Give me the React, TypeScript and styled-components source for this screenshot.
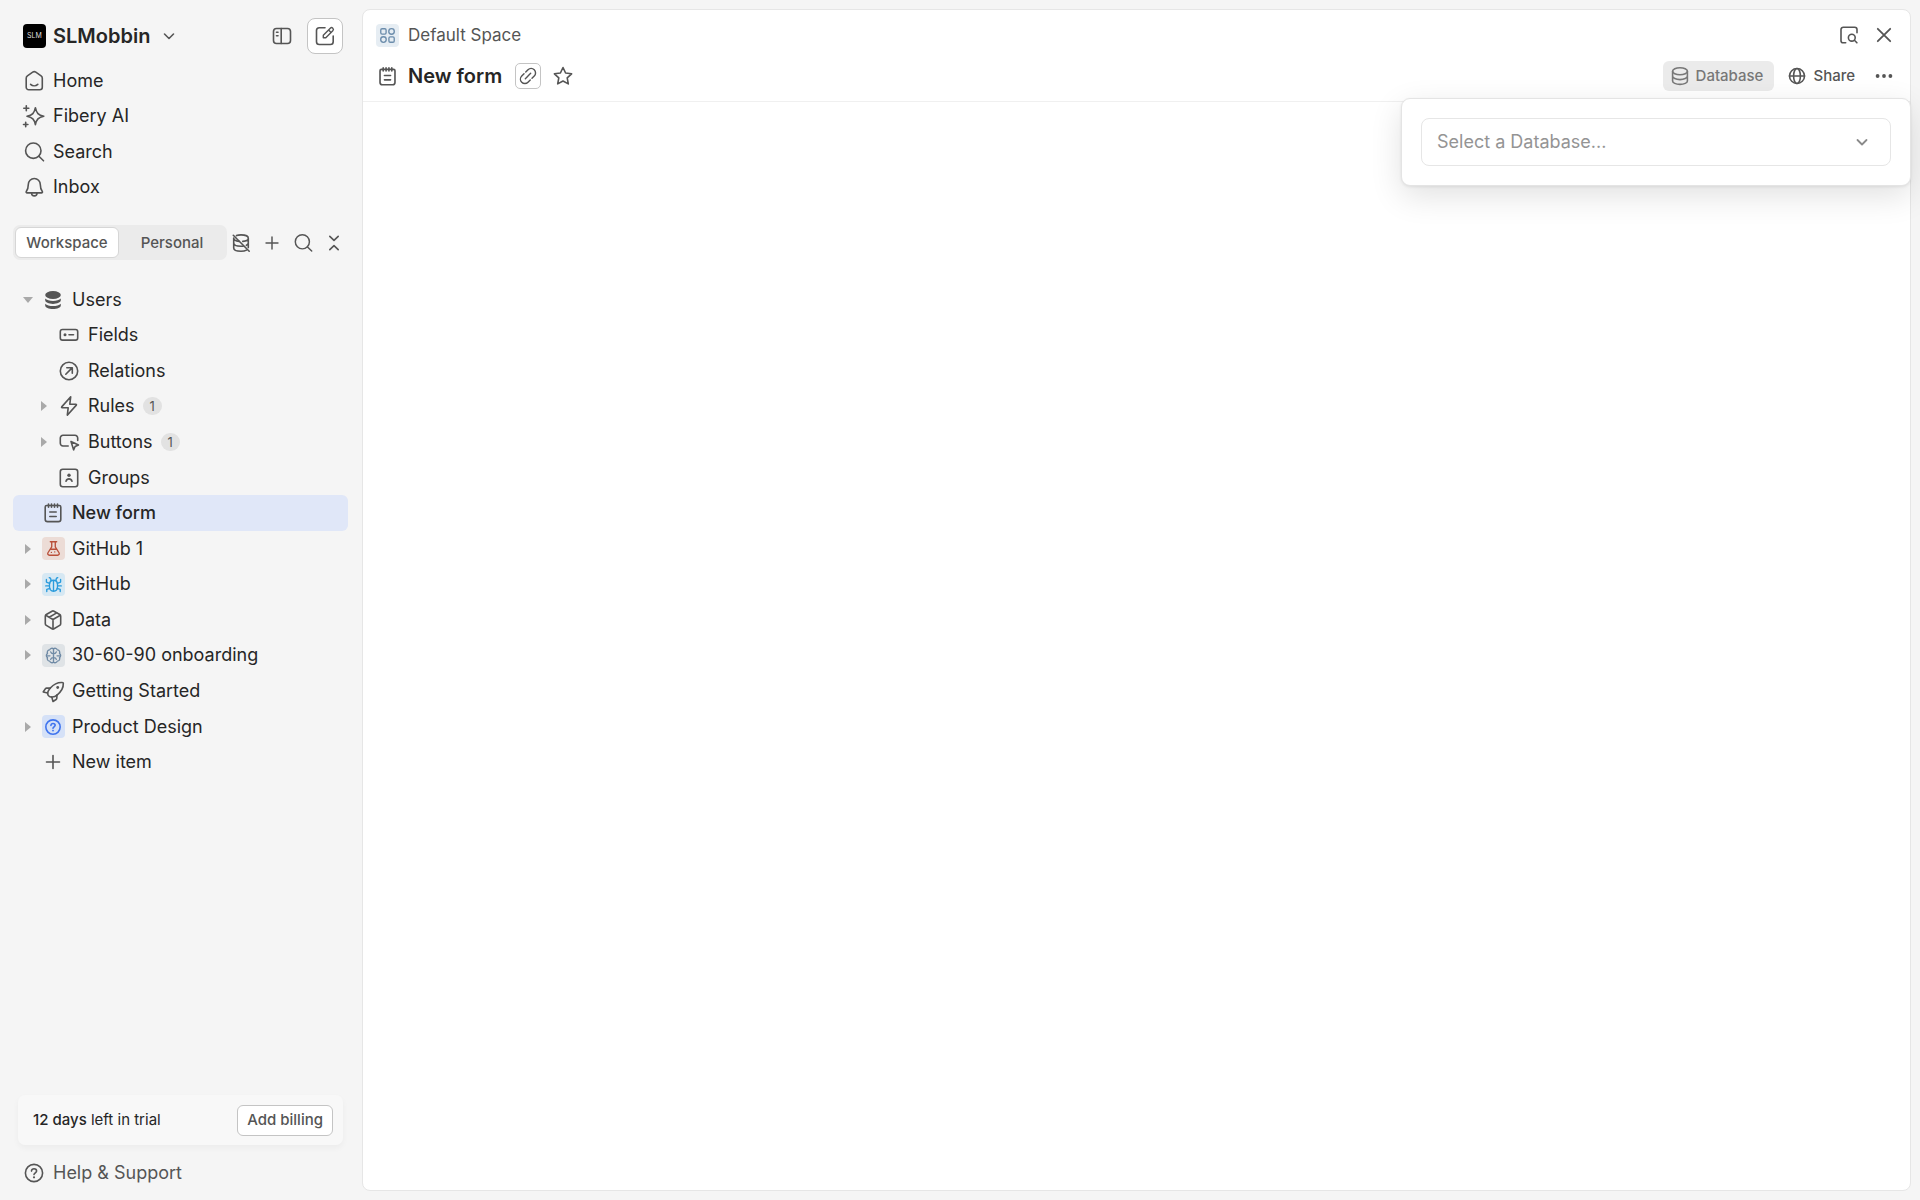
import React from "react";
import styled, { createGlobalStyle, css } from "styled-components";

const c = {
  canvas: "#f5f5f5",
  text: "#262626",
  muted: "#555555",
  soft: "#777777",
  caret: "#a9a9a9",
  line: "#e6e6e6",
};

const GlobalStyle = createGlobalStyle`
  *, *::before, *::after { box-sizing: border-box; }
  body {
    margin: 0;
    background: ${c.canvas};
    color: ${c.text};
    font-family: Inter, "Liberation Sans", sans-serif;
    font-size: 18px;
    line-height: 24px;
  }
  button, select { font: inherit; color: inherit; }
  ul { list-style: none; margin: 0; padding: 0; }
  a { color: inherit; text-decoration: none; }
`;

/* ---------- Icons ---------- */

const Svg = styled.svg<{ $size: number; $color: string; $stroke: number }>`
  display: block;
  flex: none;
  width: ${(p) => p.$size}px;
  height: ${(p) => p.$size}px;
  color: ${(p) => p.$color};
  fill: none;
  stroke: currentColor;
  stroke-width: ${(p) => p.$stroke};
  stroke-linecap: round;
  stroke-linejoin: round;
  overflow: visible;
`;

const glyphs = {
  home: (
    <>
      <path d="M10.7 3.2 5.4 6.9A2.9 2.9 0 0 0 4.2 9.3v8.9a2.5 2.5 0 0 0 2.5 2.5h11.1a2.5 2.5 0 0 0 2.5-2.5V9.3a2.9 2.9 0 0 0-1.2-2.4l-5.3-3.7a2.7 2.7 0 0 0-3.1 0Z" />
      <path d="M8.6 15.3c2 1.9 5.2 1.9 7.2 0" />
    </>
  ),
  sparkles: (
    <>
      <path d="M13.4 3.7c1 5.4 3 7.4 8.4 8.5-5.4 1.1-7.4 3.1-8.4 8.5-1-5.4-3-7.4-8.4-8.5 5.4-1.1 7.4-3.1 8.4-8.5Z" />
      <path d="M4.3 1.700v5M1.800 4.200h5M3.700 18.300v4.400M1.500 20.500h4.400" />
    </>
  ),
  search: (
    <>
      <circle cx="11.3" cy="10.7" r="7.7" />
      <path d="m16.900 16.300 4.600 4.500" />
    </>
  ),
  bell: (
    <>
      <path d="M12.300 3.500a6 6 0 0 0-6 6c0 4.200-.8 5.300-2 6.900-.5.700 0 1.500.8 1.500h14.400c.8 0 1.300-.8.8-1.500-1.200-1.600-2-2.700-2-6.900a6 6 0 0 0-6-6Z" />
      <path d="M9.600 18.200a2.700 2.700 0 0 0 5.400 0" />
    </>
  ),
  chevron: <path d="m7.500 10 4.500 4.500 4.500-4.500" />,
  panel: (
    <>
      <rect x="3.500" y="4.500" width="17" height="15" rx="3" />
      <path d="M11.200 4.500v15M6.500 8.300h1.500M6.500 11.700h1.500" />
    </>
  ),
  compose: (
    <>
      <path d="M12 3.800H6.300a2.800 2.800 0 0 0-2.800 2.800v11.100a2.800 2.800 0 0 0 2.800 2.800h11.100a2.800 2.800 0 0 0 2.800-2.800V12" />
      <path d="M10.300 13.700v-2.500l7-7a1.700 1.700 0 0 1 2.500 2.500l-7 7h-2.500ZM15.600 5.900l2.500 2.500" strokeWidth="1.400" />
    </>
  ),
  dbOff: (
    <>
      <path d="M7.500 4.600C8.700 4.100 10.300 3.900 12 3.900c4.200 0 7.300 1.400 7.300 3.300 0 1.700-2.300 2.900-5.500 3.200M4.700 7v9.900c0 1.900 3.200 3.300 7.300 3.300 2.300 0 4.200-.4 5.500-1.100M19.300 7.200v9.400M4.700 7c0 1.700 2.300 3 5.500 3.400M4.700 12c0 1.900 3.200 3.300 7.300 3.300.8 0 1.500 0 2.200-.1M19.300 12c0 .9-.7 1.700-1.900 2.300" />
      <path d="m4.300 4.300 15.900 15.900" />
    </>
  ),
  plus: <path d="M12 5.500v13M5.500 12h13" />,
  collapse: <path d="m7.800 5.300 4.200 4 4.200-4M7.800 18.700l4.200-4 4.200 4" />,
  dbSolid: (
    <g stroke="none" fill="currentColor">
      <ellipse cx="12" cy="7" rx="7.800" ry="4" />
      <path d="M4.200 10.600c1.500 1.500 4.400 2.300 7.800 2.300s6.300-.8 7.800-2.300v1.700c0 2.100-3.500 3.600-7.800 3.600s-7.800-1.500-7.800-3.600Z" />
      <path d="M4.200 15.700c1.500 1.500 4.400 2.300 7.800 2.300s6.300-.8 7.800-2.300v1.700c0 2.100-3.500 3.600-7.800 3.600s-7.800-1.500-7.800-3.600Z" />
    </g>
  ),
  field: (
    <>
      <rect x="3.300" y="6.500" width="17.400" height="10.600" rx="2.200" />
      <circle cx="8" cy="11.800" r="1.500" fill="currentColor" stroke="none" />
      <path d="M12 11.800h4.500" />
    </>
  ),
  relation: (
    <>
      <circle cx="12" cy="12" r="8.700" />
      <path d="m8.800 15.200 6.300-6.300M9.800 8.700h5.500v5.500" />
    </>
  ),
  bolt: <path d="M13.700 2.800 4.700 12.900c-.3.400-.1.900.4.900h6.100l-.9 7.400 9-10.100c.3-.4.1-.9-.4-.9h-6.100l.9-7.400Z" />,
  click: (
    <>
      <path d="M11.200 16H6a2.700 2.700 0 0 1-2.700-2.700V8A2.700 2.700 0 0 1 6 5.300h12A2.700 2.700 0 0 1 20.700 8v2.500" />
      <path d="m14 11.500 7.500 3.500-3.400 1.500-1.500 3.300L14 11.500Z" />
    </>
  ),
  group: (
    <>
      <rect x="3.300" y="3.300" width="17.400" height="17.400" rx="2.500" />
      <circle cx="12" cy="9.300" r="1.700" fill="currentColor" stroke="none" />
      <path d="M9 15.200c.5-1.500 1.600-2.300 3-2.300s2.500.8 3 2.300" />
    </>
  ),
  form: (
    <>
      <path d="M5.700 4.500h12.600c1 0 1.500.6 1.500 1.500v12.200a2.400 2.400 0 0 1-2.400 2.400H6.600a2.400 2.400 0 0 1-2.400-2.400V6c0-.9.500-1.500 1.500-1.500Z" />
      <path d="M7.500 3v3.300M10.500 3v3.300M13.500 3v3.300M16.500 3v3.300M8.800 11h6.400M8.800 15.500h6.400" />
    </>
  ),
  flask: (
    <>
      <path d="M7.500 2.500h9M9.500 2.500v7.200L4.200 18c-1 1.700.1 3.500 2 3.500h11.600c1.900 0 3-1.800 2-3.500l-5.300-8.300V2.500M7.500 13h9" />
      <path d="M9 17.500h.1M13.700 16.800h.1" />
    </>
  ),
  bug: (
    <>
      <path d="M6.300 12.500c0-4 2-6.500 5.700-6.500s5.700 2.500 5.700 6.500v2.300c0 4-2 6.700-5.700 6.700s-5.700-2.700-5.700-6.700v-2.300ZM12 6v15.500" />
      <path d="M8.500 6.500C8.500 4 7.800 2.500 6 2.300M15.500 6.500c0-2.500.7-4 2.500-4.200M6.500 10.500 2 8.500V5M17.500 10.500l4.500-2V5M6.300 14H1M17.700 14H23M7 17.500l-4.500 1.300V22M17 17.500l4.500 1.300V22" />
    </>
  ),
  box: (
    <>
      <path d="M11 3.200 5.300 6.500a2 2 0 0 0-1 1.700v7.500a2 2 0 0 0 1 1.700l5.700 3.300a2 2 0 0 0 2 0l5.700-3.300a2 2 0 0 0 1-1.700V8.200a2 2 0 0 0-1-1.700L13 3.200a2 2 0 0 0-2 0Z" />
      <path d="m4.700 7.300 7.300 4.200 7.300-4.200M12 11.500V21M8.200 9.300l7.500-4.400" />
    </>
  ),
  brain: (
    <>
      <path d="M12 2.500c-1.800-1.300-4.600-.8-5.300 1.500C4 4 2.500 6.700 3.500 9 1.400 10.700 1.400 13.300 3.500 15c-1 2.300.5 5 3.200 5 .7 2.300 3.500 2.800 5.300 1.500 1.800 1.300 4.600.8 5.300-1.500 2.700 0 4.200-2.700 3.200-5 2.100-1.700 2.100-4.300 0-6 1-2.300-.5-5-3.200-5-.7-2.300-3.500-2.800-5.300-1.500Z" />
      <path d="M12 2.500v19M12 9.500c-2 0-3.500-.5-4-2.500M12 9.500c2 0 3.500-.5 4-2.500M12 15c-2 0-3.500.5-4 2.500M12 15c2 0 3.500.5 4 2.500M3.500 12.500H7M20.500 12.500H17" />
    </>
  ),
  rocket: (
    <>
      <path d="M7.200 16.300c-1.200-1.600-.1-4.700 2.400-7.500 3.500-4 8.100-5.600 11.900-5.300.5 0 .8.300.8.800.2 3.700-2 8.200-6 11.500-2.900 2.400-7.300 3.400-9.100.5Z" />
      <path d="M9.300 9.100H5.600a1.500 1.500 0 0 0-1.200.6L2.200 12.900l4.500 1.200M16 15.900l-.2 3.400a1.500 1.500 0 0 1-.7 1.200l-3.100 2-1.200-4.500" />
      <circle cx="16.700" cy="8.500" r="1.400" fill="currentColor" stroke="none" />
    </>
  ),
  help: (
    <>
      <circle cx="12" cy="12" r="8.600" />
      <path d="M9.500 10.100c0-1.400 1.100-2.400 2.500-2.400s2.600 1 2.600 2.300c0 1.600-2.600 2-2.600 3.600" />
      <circle cx="12" cy="16.300" r="1.100" fill="currentColor" stroke="none" />
    </>
  ),
  apps: (
    <>
      <rect x="2.500" y="2.500" width="7.500" height="7.500" rx="1.800" />
      <circle cx="17.700" cy="6.300" r="3.900" />
      <circle cx="6.300" cy="17.700" r="3.900" />
      <rect x="14" y="14" width="7.500" height="7.500" rx="1.800" />
    </>
  ),
  link: (
    <>
      <path d="m9.300 7.200 2.700-2.700a5.300 5.300 0 0 1 7.500 7.500l-2.700 2.700" />
      <path d="M7.200 9.300 4.500 12a5.300 5.300 0 0 0 7.500 7.500l2.700-2.700" />
      <path d="m8.800 15.200 6.400-6.400" />
    </>
  ),
  star: <path d="m12 3.500 2.600 5.500 6 .8-4.400 4.100 1.100 6-5.300-2.900-5.300 2.900 1.100-6-4.400-4.100 6-.8L12 3.500Z" />,
  preview: (
    <>
      <path d="M8.700 19.700H6a2 2 0 0 1-2-2V6.500a2.300 2.300 0 0 1 2.300-2.300h11.400A2.300 2.300 0 0 1 20 6.500v3.200" />
      <circle cx="14.800" cy="14.700" r="3.400" />
      <path d="m17.400 17.300 2.500 2.500" />
    </>
  ),
  close: <path d="m5.800 5.800 12.400 12.400M18.200 5.800 5.800 18.200" />,
  database: (
    <>
      <ellipse cx="12" cy="7.300" rx="7.400" ry="3.500" />
      <path d="M4.600 7.300v9.600c0 1.900 3.300 3.500 7.400 3.500s7.400-1.600 7.400-3.500V7.300M4.600 12.100c0 1.900 3.300 3.500 7.400 3.500s7.400-1.600 7.400-3.500" />
    </>
  ),
  globe: (
    <>
      <circle cx="12" cy="12" r="7.500" />
      <ellipse cx="12" cy="12" rx="3.400" ry="7.500" />
      <path d="M4.500 12h15" />
    </>
  ),
  dots: (
    <g fill="currentColor" stroke="none">
      <circle cx="5.600" cy="12" r="1.900" />
      <circle cx="12" cy="12" r="1.900" />
      <circle cx="18.400" cy="12" r="1.900" />
    </g>
  ),
};

type GlyphName = keyof typeof glyphs;

function Icon({ name, size = 24, color = c.muted, stroke = 1.6 }: { name: GlyphName; size?: number; color?: string; stroke?: number }) {
  return (
    <Svg viewBox="0 0 24 24" $size={size} $color={color} $stroke={stroke} aria-hidden="true">
      {glyphs[name]}
    </Svg>
  );
}

/* ---------- Shell ---------- */

const Shell = styled.div`
  display: flex;
  height: 100vh;
  padding: 9px 9px 9px 0;
`;

const Sidebar = styled.aside`
  flex: 0 0 362px;
  display: flex;
  flex-direction: column;
  padding: 9px 14px 0 13px;
`;

const SidebarTop = styled.header`
  display: flex;
  align-items: center;
  gap: 7px;
  height: 36px;
  padding: 0 5px 0 10px;
`;

const WorkspaceButton = styled.button`
  display: flex;
  align-items: center;
  gap: 7px;
  margin-right: auto;
  padding: 0;
  border: 0;
  background: none;
  font-size: 20px;
  font-weight: 600;
`;

const Logo = styled.span`
  display: grid;
  place-items: center;
  width: 23px;
  height: 24px;
  border-radius: 4px;
  background: #000;
  color: #ddd;
  font-size: 7px;
  line-height: 8px;
  font-weight: 400;
`;

const IconButton = styled.button<{ $size: number; $outlined?: boolean; $radius?: number }>`
  display: grid;
  place-items: center;
  flex: none;
  width: ${(p) => p.$size}px;
  height: ${(p) => p.$size}px;
  padding: 0;
  border: 0;
  border-radius: ${(p) => p.$radius ?? 6}px;
  background: none;
  ${(p) =>
    p.$outlined &&
    css`
      border: 1px solid #c4c4c4;
      background: #fff;
    `}
`;

const NavList = styled.ul`
  display: grid;
  grid-auto-rows: 1fr;
  height: 142px;
  margin-top: 9px;
`;

const NavLink = styled.a`
  display: flex;
  align-items: center;
  gap: 7px;
  height: 100%;
  padding-left: 9px;
`;

const SwitchRow = styled.div`
  display: flex;
  align-items: center;
  justify-content: space-between;
  height: 35px;
  margin-top: 20px;
`;

const Segments = styled.div`
  display: grid;
  grid-template-columns: 104px 1fr;
  width: 214px;
  padding: 2px;
  border-radius: 7px;
  background: #ebebeb;
`;

const Segment = styled.button<{ $active?: boolean }>`
  height: 31px;
  padding: 0;
  border: 1px solid ${(p) => (p.$active ? "#d6d6d6" : "transparent")};
  border-radius: 6px;
  background: ${(p) => (p.$active ? "#fff" : "transparent")};
  color: ${c.muted};
  font-size: 15px;
  font-weight: 500;
`;

const Tools = styled.div`
  display: flex;
  gap: 7px;
  padding-right: 2px;
`;

/* ---------- Tree ---------- */

const Tree = styled.ul`
  display: grid;
  grid-auto-rows: 1fr;
  height: 498px;
  margin-top: 22px;
`;

const TreeLink = styled.a<{ $nested?: boolean; $active?: boolean }>`
  display: flex;
  align-items: center;
  height: 100%;
  padding-left: ${(p) => (p.$nested ? 23 : 7)}px;
  border-radius: 6px;
  background: ${(p) => (p.$active ? "#e0e7f8" : "transparent")};
  font-weight: ${(p) => (p.$active ? 500 : 400)};
`;

const CaretSlot = styled.span`
  display: grid;
  place-items: center;
  width: 16px;
  height: 16px;
`;

const Caret = styled.span<{ $open?: boolean }>`
  border-style: solid;
  border-color: transparent;
  ${(p) =>
    p.$open
      ? css`
          border-width: 6px 5px 0;
          border-top-color: ${c.caret};
        `
      : css`
          border-width: 5px 0 5px 6px;
          border-left-color: ${c.caret};
        `}
`;

const IconSlot = styled.span`
  display: grid;
  place-items: center;
  width: 24px;
  height: 24px;
  margin: 0 7px 0 5px;
`;

const Tile = styled.span<{ $bg: string }>`
  display: grid;
  place-items: center;
  flex: none;
  width: 23px;
  height: 23px;
  border-radius: 4px;
  background: ${(p) => p.$bg};
`;

const Count = styled.span`
  margin-left: 8px;
  padding: 0 7px;
  border-radius: 9px;
  background: #e2e2e2;
  color: ${c.muted};
  font-size: 13px;
  line-height: 18px;
`;

/* ---------- Sidebar footer ---------- */

const Footer = styled.footer`
  display: flex;
  flex-direction: column;
  gap: 10px;
  margin-top: auto;
`;

const Trial = styled.div`
  display: flex;
  align-items: center;
  justify-content: space-between;
  height: 50px;
  margin: 0 5px;
  padding: 0 10px 0 15px;
  border-radius: 7px;
  background: #f8f8f8;
  box-shadow: 0 3px 6px rgba(0, 0, 0, 0.04);
  font-size: 15px;

  strong { font-weight: 500; }
`;

const BillingButton = styled.button`
  height: 31px;
  padding: 0 9px;
  border: 1px solid #c4c4c4;
  border-radius: 6px;
  background: #fff;
  color: ${c.muted};
  font-size: 15px;
  font-weight: 500;
`;

const HelpLink = styled(NavLink)`
  height: 36px;
  color: ${c.muted};
`;

/* ---------- Main panel ---------- */

const Panel = styled.main`
  position: relative;
  flex: 1;
  min-width: 0;
  border: 1px solid ${c.line};
  border-radius: 8px;
  background: #fff;
`;

const PanelHeader = styled.header`
  padding: 7px 14px 0 13px;
  height: 92px;
  border-bottom: 1px solid #f0f0f0;
`;

const Bar = styled.div<{ $height: number }>`
  display: flex;
  align-items: center;
  justify-content: space-between;
  height: ${(p) => p.$height}px;
`;

const Group = styled.div<{ $gap: number }>`
  display: flex;
  align-items: center;
  gap: ${(p) => p.$gap}px;
`;

const Crumb = styled.a`
  display: flex;
  align-items: center;
  gap: 9px;
  color: ${c.muted};
  font-size: 17px;
`;

const Title = styled.h1`
  margin: 0 4px 0 0;
  font-size: 20px;
  line-height: 24px;
  font-weight: 600;
`;

const TextButton = styled.button<{ $active?: boolean }>`
  display: flex;
  align-items: center;
  gap: 4px;
  height: 30px;
  padding: 0 11px 0 5px;
  border: 0;
  border-radius: 6px;
  background: ${(p) => (p.$active ? "#ebebeb" : "transparent")};
  color: ${(p) => (p.$active ? c.soft : c.muted)};
  font-size: 15px;
  font-weight: 500;
`;

const Popover = styled.div`
  position: absolute;
  top: 88px;
  right: -1px;
  width: 510px;
  padding: 19px;
  border: 1px solid #e4e4e4;
  border-radius: 9px;
  background: #fff;
  box-shadow: 0 10px 32px rgba(0, 0, 0, 0.12), 0 1px 3px rgba(0, 0, 0, 0.08);
`;

const SelectField = styled.label`
  display: grid;
  align-items: center;
  justify-items: end;

  > * { grid-area: 1 / 1; }
  > svg { margin-right: 17px; pointer-events: none; }
`;

const Select = styled.select`
  width: 100%;
  height: 48px;
  padding: 0 48px 0 15px;
  border: 1px solid ${c.line};
  border-radius: 8px;
  background: #fff;
  color: #949494;
  appearance: none;
`;

/* ---------- Content ---------- */

const nav: { label: string; icon: GlyphName }[] = [
  { label: "Home", icon: "home" },
  { label: "Fibery AI", icon: "sparkles" },
  { label: "Search", icon: "search" },
  { label: "Inbox", icon: "bell" },
];

type Item = {
  label: string;
  icon: GlyphName;
  caret?: "open" | "closed";
  nested?: boolean;
  active?: boolean;
  count?: number;
  tile?: { bg: string; color: string };
};

const items: Item[] = [
  { label: "Users", icon: "dbSolid", caret: "open" },
  { label: "Fields", icon: "field", nested: true },
  { label: "Relations", icon: "relation", nested: true },
  { label: "Rules", icon: "bolt", nested: true, caret: "closed", count: 1 },
  { label: "Buttons", icon: "click", nested: true, caret: "closed", count: 1 },
  { label: "Groups", icon: "group", nested: true },
  { label: "New form", icon: "form", active: true },
  { label: "GitHub 1", icon: "flask", caret: "closed", tile: { bg: "#ecdcd6", color: "#b9503a" } },
  { label: "GitHub", icon: "bug", caret: "closed", tile: { bg: "#d6e8f3", color: "#2a9bdc" } },
  { label: "Data", icon: "box", caret: "closed" },
  { label: "30-60-90 onboarding", icon: "brain", caret: "closed", tile: { bg: "#dfe3e6", color: "#6f8aa5" } },
  { label: "Getting Started", icon: "rocket" },
  { label: "Product Design", icon: "help", caret: "closed", tile: { bg: "#d5e1f7", color: "#3f74ee" } },
  { label: "New item", icon: "plus" },
];

function TreeItem({ item }: { item: Item }) {
  return (
    <li>
      <TreeLink href="#" $nested={item.nested} $active={item.active}>
        <CaretSlot>{item.caret && <Caret $open={item.caret === "open"} />}</CaretSlot>
        <IconSlot>
          {item.tile ? (
            <Tile $bg={item.tile.bg}>
              <Icon name={item.icon} size={item.icon === "help" ? 20 : 17} color={item.tile.color} stroke={1.9} />
            </Tile>
          ) : (
            <Icon name={item.icon} />
          )}
        </IconSlot>
        {item.label}
        {item.count && <Count>{item.count}</Count>}
      </TreeLink>
    </li>
  );
}

export default function App() {
  return (
    <>
      <GlobalStyle />
      <Shell>
        <Sidebar>
          <SidebarTop>
            <WorkspaceButton type="button">
              <Logo>SLM</Logo>
              SLMobbin
              <Icon name="chevron" />
            </WorkspaceButton>
            <IconButton type="button" $size={36} aria-label="Toggle sidebar">
              <Icon name="panel" />
            </IconButton>
            <IconButton type="button" $size={36} $outlined $radius={8} aria-label="Create">
              <Icon name="compose" />
            </IconButton>
          </SidebarTop>

          <nav>
            <NavList>
              {nav.map((n) => (
                <li key={n.label}>
                  <NavLink href="#">
                    <Icon name={n.icon} />
                    {n.label}
                  </NavLink>
                </li>
              ))}
            </NavList>
          </nav>

          <SwitchRow>
            <Segments>
              <Segment type="button" $active>Workspace</Segment>
              <Segment type="button">Personal</Segment>
            </Segments>
            <Tools>
              <IconButton type="button" $size={24} aria-label="Hide databases"><Icon name="dbOff" /></IconButton>
              <IconButton type="button" $size={24} aria-label="Add"><Icon name="plus" size={22} /></IconButton>
              <IconButton type="button" $size={24} aria-label="Search the sidebar"><Icon name="search" size={22} /></IconButton>
              <IconButton type="button" $size={24} aria-label="Collapse all"><Icon name="collapse" /></IconButton>
            </Tools>
          </SwitchRow>

          <Tree>
            {items.map((item) => (
              <TreeItem key={item.label} item={item} />
            ))}
          </Tree>

          <Footer>
            <Trial>
              <span><strong>12 days</strong> left in trial</span>
              <BillingButton type="button">Add billing</BillingButton>
            </Trial>
            <HelpLink href="#">
              <Icon name="help" />
              Help &amp; Support
            </HelpLink>
          </Footer>
        </Sidebar>

        <Panel>
          <PanelHeader>
            <Bar $height={36}>
              <Crumb href="#">
                <Tile $bg="#e6edf3"><Icon name="apps" size={17} color="#6c8dac" stroke={1.9} /></Tile>
                Default Space
              </Crumb>
              <Group $gap={11}>
                <IconButton type="button" $size={24} aria-label="Preview"><Icon name="preview" /></IconButton>
                <IconButton type="button" $size={24} aria-label="Close"><Icon name="close" stroke={1.8} /></IconButton>
              </Group>
            </Bar>
            <Bar $height={46}>
              <Group $gap={9}>
                <Icon name="form" size={23} stroke={1.7} />
                <Title>New form</Title>
                <IconButton type="button" $size={26} $outlined $radius={5} aria-label="Copy link"><Icon name="link" size={20} stroke={1.7} /></IconButton>
                <IconButton type="button" $size={26} aria-label="Add to favorites"><Icon name="star" /></IconButton>
              </Group>
              <Group $gap={6}>
                <TextButton type="button" $active><Icon name="database" color={c.soft} />Database</TextButton>
                <TextButton type="button"><Icon name="globe" />Share</TextButton>
                <IconButton type="button" $size={24} aria-label="More"><Icon name="dots" /></IconButton>
              </Group>
            </Bar>
          </PanelHeader>

          <Popover>
            <SelectField>
              <Select aria-label="Database" defaultValue="">
                <option value="">Select a Database...</option>
              </Select>
              <Icon name="chevron" color="#8a8a8a" stroke={1.8} />
            </SelectField>
          </Popover>
        </Panel>
      </Shell>
    </>
  );
}
